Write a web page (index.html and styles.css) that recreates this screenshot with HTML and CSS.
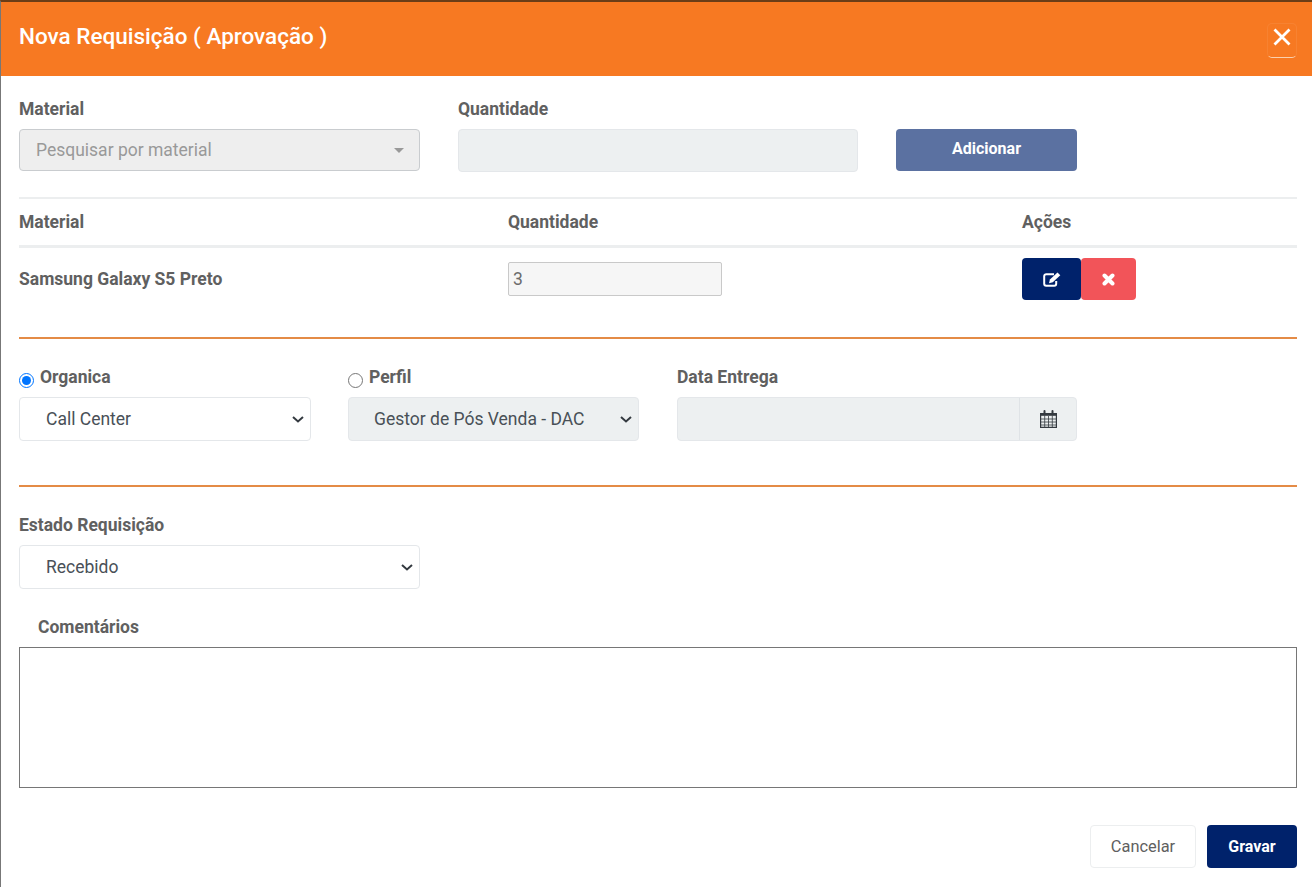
FILE: index.html
```html
<!DOCTYPE html>
<html lang="pt">
<head>
    <meta charset="UTF-8">
    <title>Nova Requisição</title>
    <link rel="stylesheet" href="styles.css">
</head>
<body>

<div class="modal">
    <div class="modal-header">
        <h1>Nova Requisição ( Aprovação )</h1>
        <button type="button" class="close-btn" aria-label="Fechar">
            <svg width="18" height="18" viewBox="0 0 18 18"><path d="M1.500 1.500 L16.500 16.500 M16.500 1.500 L1.500 16.500" stroke="#fff" stroke-width="2.8" fill="none"/></svg>
        </button>
    </div>

    <div class="modal-body">
        <div class="add-row">
            <div>
                <label class="field-label">Material</label>
                <div class="fake-select">
                    <span>Pesquisar por material</span>
                    <i class="caret"></i>
                </div>
            </div>
            <div>
                <label class="field-label">Quantidade</label>
                <input type="text" class="input input-disabled qty-input" disabled>
            </div>
            <button type="button" class="btn btn-add">Adicionar</button>
        </div>

        <div class="items-table">
            <div class="items-head">
                <span>Material</span>
                <span>Quantidade</span>
                <span>Ações</span>
            </div>
            <div class="items-row">
                <span class="item-name">Samsung Galaxy S5 Preto</span>
                <span><input type="text" class="item-qty" value="3" disabled></span>
                <span class="item-actions">
                    <button type="button" class="btn btn-edit" aria-label="Editar">
                        <svg width="18" height="15" viewBox="0 0 18 15"><path d="M11 2.200H3.200A2 2 0 0 0 1.200 4.200v7.600a2 2 0 0 0 2 2h8a2 2 0 0 0 2-2V9" fill="none" stroke="#fff" stroke-width="2"/><path d="M14.500.6 17.300 3.200 9.800 10.300 6 11.200 6.900 7.500Z" fill="#fff"/></svg>
                    </button>
                    <button type="button" class="btn btn-del" aria-label="Remover">
                        <svg width="13" height="13" viewBox="0 0 13 13"><path d="M2.500 2.500 10.500 10.500M10.500 2.500 2.500 10.500" stroke="#fff" stroke-width="4" stroke-linecap="round"/></svg>
                    </button>
                </span>
            </div>
        </div>

        <div class="choice-row">
            <div>
                <label class="radio-label"><input type="radio" name="dest" checked> Organica</label>
                <select class="input select">
                    <option>Call Center</option>
                </select>
            </div>
            <div>
                <label class="radio-label"><input type="radio" name="dest"> Perfil</label>
                <select class="input select select-off">
                    <option>Gestor de Pós Venda - DAC</option>
                </select>
            </div>
            <div class="date-col">
                <label class="field-label date-label">Data Entrega</label>
                <div class="date-group">
                    <div class="date-value"></div>
                    <div class="date-icon">
                        <svg width="17" height="18" viewBox="0 0 17 18"><path d="M.6 3.500h15.800v13.900H.6Z" fill="none" stroke="#343a40" stroke-width="1.200"/><path d="M1 3h15v2.800H1Z" fill="#343a40"/><path d="M1 9h15M1 12h15M1 15h15M4.700 6v11M8.500 6v11M12.300 6v11" stroke="#343a40" stroke-width=".8"/><path d="M4.500 1v3.500M12.500 1v3.500" stroke="#343a40" stroke-width="2" stroke-linecap="round"/></svg>
                    </div>
                </div>
            </div>
        </div>

        <div class="state-row">
            <label class="field-label">Estado Requisição</label>
            <select class="input select state-select">
                <option>Recebido</option>
            </select>
        </div>

        <div class="comments">
            <label class="field-label comments-label">Comentários</label>
            <textarea></textarea>
        </div>

        <div class="modal-footer">
            <button type="button" class="btn btn-cancel">Cancelar</button>
            <button type="button" class="btn btn-save">Gravar</button>
        </div>
    </div>
</div>

</body>
</html>
```

FILE: styles.css
```css
html, body {
    margin: 0;
    height: 100%;
    background: #fff;
    overflow: hidden;
}
* {
    box-sizing: border-box;
}
body {
    font-family: Roboto, "Liberation Sans", sans-serif;
    font-size: 17.5px;
    color: #606060;
}
.modal {
    height: 887px;
    border-top: 2px solid #6b3d17;
    border-left: 1px solid #777;
}
.modal-header {
    height: 74px;
    background-color: #f77922;
    display: flex;
    align-items: flex-start;
    justify-content: space-between;
    padding: 0 15px 0 18px;
}
.modal-header h1 {
    margin: 19px 0 0;
    font-size: 22.500px;
    line-height: 30px;
    font-weight: 500;
    color: #fff;
}
.close-btn {
    width: 30px;
    height: 35px;
    margin-top: 21px;
    padding: 0 0 5px;
    background: none;
    border: 1px solid rgba(255,255,255,0.07);
    border-bottom-color: #fbd0ae;
    border-radius: 5px;
}
.modal-body {
    padding: 0 15px 0 18px;
}
.field-label, .radio-label {
    display: block;
    font-weight: 700;
    line-height: 20px;
    color: #606060;
}
.add-row {
    display: grid;
    grid-template-columns: 401px 400px 181px;
    column-gap: 38px;
    align-items: end;
    height: 123px;
    padding-bottom: 26px;
    border-bottom: 2px solid #eceeef;
}
.add-row .field-label {
    margin-bottom: 10px;
}
.fake-select {
    height: 42px;
    padding: 0 16px;
    display: flex;
    align-items: center;
    justify-content: space-between;
    background: #eee;
    border: 1px solid #c9cccf;
    border-radius: 4px;
    color: #999;
}
.caret {
    border-left: 5px solid transparent;
    border-right: 5px solid transparent;
    border-top: 5px solid #999;
    margin-right: -1px;
}
.input {
    display: block;
    width: 100%;
    font-family: inherit;
    font-size: 17.5px;
    color: #495057;
    background-color: #fff;
    border: 1px solid #e4e7ea;
    border-radius: 4px;
}
.input-disabled {
    background-color: #edf0f1;
}
.qty-input {
    height: 43px;
    margin-bottom: -1px;
}
.btn {
    border: none;
    border-radius: 4px;
    font-family: inherit;
    font-size: 16px;
    font-weight: 700;
    color: #fff;
    cursor: pointer;
}
.btn-add {
    height: 42px;
    padding-bottom: 4px;
    background-color: #5b71a1;
}
.items-head, .items-row {
    display: grid;
    grid-template-columns: 489px 514px 1fr;
    align-items: center;
}
.items-head {
    height: 49px;
    font-weight: 700;
    border-bottom: 3px solid #eceeef;
}
.items-row {
    height: 91px;
    padding-bottom: 27px;
    border-bottom: 2px solid #e48b46;
}
.item-name {
    font-weight: 700;
}
.item-qty {
    display: block;
    width: 214px;
    height: 34px;
    padding: 0 4px;
    font-family: inherit;
    font-size: 17.500px;
    color: #6c6c6c;
    background: #f6f6f6;
    border: 1px solid #c9c9c9;
    border-radius: 2px;
}
.item-actions {
    display: flex;
}
.btn-edit, .btn-del {
    height: 42px;
    display: flex;
    align-items: center;
    justify-content: center;
}
.btn-edit {
    width: 59px;
    padding-bottom: 1px;
    background-color: #00226b;
}
.btn-del {
    width: 55px;
    background-color: #f25459;
}
.choice-row {
    display: grid;
    grid-template-columns: 292px 291px 401px;
    column-gap: 37px;
    height: 148px;
    padding-top: 27px;
    border-bottom: 2px solid #e48b46;
}
.date-col {
    margin-left: 1px;
}
.radio-label {
    height: 31px;
    padding-top: 1px;
    display: flex;
    align-items: flex-start;
    gap: 6px;
}
.radio-label input {
    width: 15px;
    height: 15px;
    margin: 6px 0 0;
}
.date-label {
    height: 31px;
    padding-top: 1px;
}
.select {
    height: 44px;
    padding-left: 26px;
    appearance: none;
    background-image: url("data:image/svg+xml,%3Csvg xmlns='http://www.w3.org/2000/svg' width='12' height='7'%3E%3Cpath d='M1 1l5 4.500L11 1' fill='none' stroke='%23343a40' stroke-width='2'/%3E%3C/svg%3E");
    background-repeat: no-repeat;
    background-position: right 6px center;
}
.select-off {
    padding-left: 25px;
    background-color: #edf0f1;
}
.date-group {
    display: flex;
    height: 44px;
    background: #edf0f1;
    border: 1px solid #e4e7ea;
    border-radius: 4px;
}
.date-value {
    flex: 1;
}
.date-icon {
    width: 57px;
    display: flex;
    align-items: center;
    justify-content: center;
    border-left: 1px solid #dfe3e6;
}
.state-row {
    padding-top: 28px;
}
.state-row .field-label {
    margin-bottom: 10px;
}
.state-select {
    width: 401px;
}
.comments {
    padding-top: 28px;
}
.comments-label {
    padding-left: 19px;
    margin-bottom: 10px;
}
.comments textarea {
    display: block;
    width: 100%;
    height: 141px;
    border: 1px solid #767676;
    resize: none;
    background: #fff;
}
.modal-footer {
    display: flex;
    justify-content: flex-end;
    gap: 11px;
    padding-top: 37px;
}
.btn-cancel {
    width: 106px;
    height: 43px;
    padding-bottom: 2px;
    background: #fff;
    border: 1px solid #eceeef;
    color: #606060;
    font-size: 16.400px;
    font-weight: 400;
}
.btn-save {
    width: 90px;
    height: 43px;
    padding-bottom: 2px;
    background-color: #00226b;
}
```
